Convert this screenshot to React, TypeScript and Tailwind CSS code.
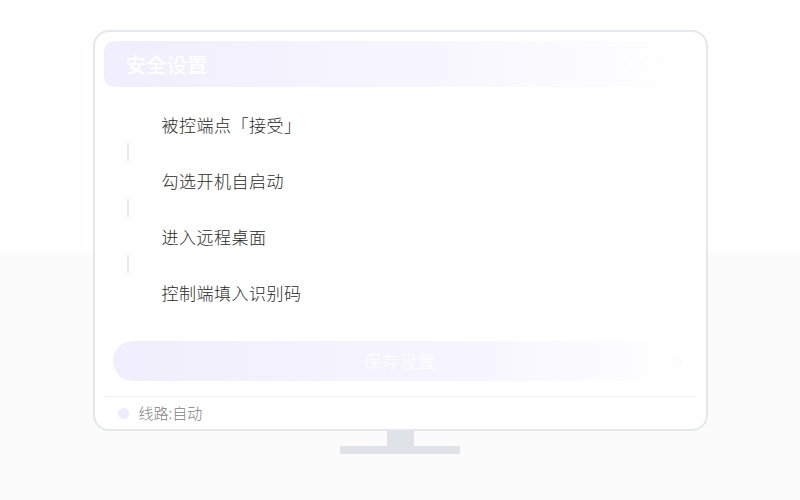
import { ChevronRight } from 'lucide-react';

const STEPS = ['被控端点「接受」', '勾选开机自启动', '进入远程桌面', '控制端填入识别码'];

export default function App() {
  return (
    <div
      className="w-[800px] h-[500px] overflow-hidden bg-[linear-gradient(to_bottom,#ffffff_0%,#ffffff_50%,#fbfbfc_51%,#fbfbfc_100%)]"
      style={{ fontFamily: '"Noto Sans CJK SC", "Noto Sans", sans-serif' }}
    >
      <div className="flex flex-col items-center pt-[30px]">
        {/* Monitor */}
        <div className="w-[615px] h-[401px] bg-white border-2 border-[#e4e7eb] rounded-[16px] flex flex-col">
          {/* Header */}
          <div className="mx-[9px] mt-[9px] h-[46px] rounded-[10px] bg-[linear-gradient(to_right,#f1eefd,#f7f6fe_55%,#ffffff)] flex items-center justify-between px-[22px]">
            <span className="text-[20.5px] font-medium text-white">安全设置</span>
            <div className="flex items-center gap-[12px] mr-[8px]">
              <span className="w-[5px] h-[5px] rounded-full bg-white" />
              <span className="w-[5px] h-[5px] rounded-full bg-white" />
              <span className="w-[5px] h-[5px] rounded-full bg-white" />
            </div>
          </div>

          {/* Steps */}
          <div className="flex flex-col mt-[26px] pl-[32px]">
            {STEPS.map((step, i) => (
              <div key={step}>
                <div className="h-[24px] flex items-center pl-[35px] text-[17px] tracking-[0.5px] font-light text-[#2a2a2a] leading-[24px]">
                  {step}
                </div>
                {i < STEPS.length - 1 && (
                  <div className="h-[32px] pt-[6px]">
                    <div className="w-[2px] h-[18px] bg-[#e5e7eb]" />
                  </div>
                )}
              </div>
            ))}
          </div>

          {/* Save button */}
          <div className="mx-[18px] mt-[36px] h-[40px] rounded-full bg-[linear-gradient(to_right,#f1eefd,#f6f5fe_60%,#ffffff)] flex items-center relative">
            <span className="flex-1 text-center text-[17px] font-light text-white tracking-[1px]">保存设置</span>
            <ChevronRight className="absolute right-[2px] w-[12px] h-[12px] text-[#f0f0f3]" />
          </div>

          {/* Footer */}
          <div className="mx-[10px] mt-[15px] border-t border-[#eceef1] flex-1 flex items-center gap-[10px] px-[13px]">
            <span className="w-[11px] h-[11px] rounded-full bg-[#eeebfc]" />
            <span className="text-[15px] font-light text-[#7d8087]">线路:自动</span>
          </div>
        </div>

        {/* Stand */}
        <div className="w-[27px] h-[15px] bg-[#dfe2e6]" />
        <div className="w-[120px] h-[8px] bg-[#dfe2e6]" />
      </div>
    </div>
  );
}
